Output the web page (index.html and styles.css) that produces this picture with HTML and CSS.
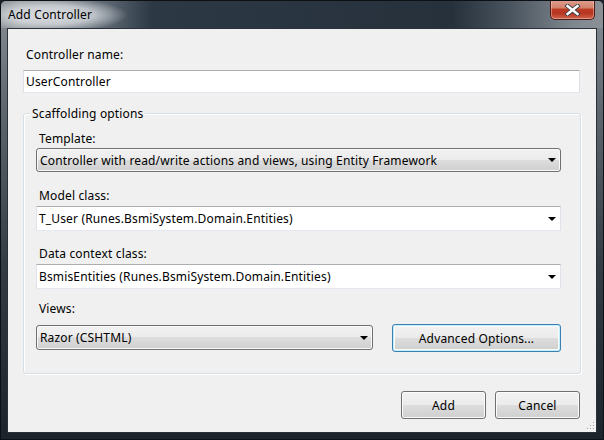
FILE: index.html
```html
<!DOCTYPE html>
<html>
<head>
<meta charset="utf-8">
<link rel="stylesheet" href="styles.css">
</head>
<body>
<div class="window">
  <div class="titlebar">
    <span class="title">Add Controller</span>
    <div class="close">
      <svg width="17" height="12" viewBox="0 0 17 12">
        <path d="M3.5 2 L13.5 10 M13.5 2 L3.5 10" stroke="#3a3f46" stroke-width="4.2" stroke-linecap="square"/>
        <path d="M3.5 2 L13.5 10 M13.5 2 L3.5 10" stroke="#ffffff" stroke-width="2.4" stroke-linecap="square"/>
      </svg>
    </div>
  </div>
  <div class="client">
    <div class="lbl first">Controller name:</div>
    <div class="textbox">UserController</div>
    <div class="group">
      <span class="legend">Scaffolding options</span>
      <div class="lbl g1">Template:</div>
      <div class="combo btnlike">
        <span>Controller with read/write actions and views, using Entity Framework</span>
        <span class="arrow"></span>
      </div>
      <div class="lbl g2">Model class:</div>
      <div class="combo edit">
        <span>T_User (Runes.BsmiSystem.Domain.Entities)</span>
        <span class="arrow"></span>
      </div>
      <div class="lbl g3">Data context class:</div>
      <div class="combo edit">
        <span>BsmisEntities (Runes.BsmiSystem.Domain.Entities)</span>
        <span class="arrow"></span>
      </div>
      <div class="lbl g4">Views:</div>
      <div class="viewrow">
        <div class="combo btnlike views">
          <span>Razor (CSHTML)</span>
          <span class="arrow"></span>
        </div>
        <div class="button focus">Advanced Options...</div>
      </div>
    </div>
    <div class="footer">
      <div class="button foot">Add</div>
      <div class="button foot">Cancel</div>
    </div>
    <svg class="grip" width="8" height="8" viewBox="0 0 8 8">
      <rect x="6" y="0" width="1" height="1" fill="#a0a0a0"/>
      <rect x="3" y="3" width="1" height="1" fill="#a0a0a0"/>
      <rect x="6" y="3" width="1" height="1" fill="#a0a0a0"/>
      <rect x="0" y="6" width="1" height="1" fill="#a0a0a0"/>
      <rect x="3" y="6" width="1" height="1" fill="#a0a0a0"/>
      <rect x="6" y="6" width="1" height="1" fill="#a0a0a0"/>
      <rect x="7" y="1" width="1" height="1" fill="#fff"/>
      <rect x="4" y="4" width="1" height="1" fill="#fff"/>
      <rect x="7" y="4" width="1" height="1" fill="#fff"/>
      <rect x="1" y="7" width="1" height="1" fill="#fff"/>
      <rect x="4" y="7" width="1" height="1" fill="#fff"/>
      <rect x="7" y="7" width="1" height="1" fill="#fff"/>
    </svg>
  </div>
</div>
</body>
</html>
```

FILE: styles.css
```css
* { box-sizing: border-box; }
html, body { margin: 0; padding: 0; }
body {
  width: 604px;
  height: 440px;
  overflow: hidden;
  font-family: "Noto Sans", "Open Sans", sans-serif;
  font-size: 12px;
  letter-spacing: 0.15px;
  color: #000;
  background: #1b2128;
}
.window {
  width: 604px;
  height: 440px;
  border: 1px solid #0d1115;
  border-radius: 6px 6px 0 0;
  background: linear-gradient(to bottom, #8a9096 0%, #5d656d 25%, #333b44 60%, #1c232b 100%);
  display: flex;
  flex-direction: column;
  overflow: hidden;
}
.titlebar {
  height: 27px;
  flex: none;
  display: flex;
  justify-content: space-between;
  align-items: flex-start;
  padding: 0 8px 0 7px;
  background:
    radial-gradient(ellipse 75px 17px at 52px 14px, rgba(225,228,231,0.95) 0%, rgba(225,228,231,0.7) 55%, rgba(225,228,231,0) 100%),
    linear-gradient(to right, #8e959b 0%, #9aa0a6 3%, #5a6570 18%, #2c3844 25%, #26313c 75%, #4c5660 85%, #7f878e 95%, #8a9096 100%);
}
.title {
  line-height: 16px;
  margin-top: 6px;
  color: #000;
}
.close {
  width: 45px;
  height: 20px;
  margin-top: -1px;
  border: 1px solid #4b1d16;
  border-top: none;
  border-radius: 0 0 5px 5px;
  background: linear-gradient(to bottom, #dfa08f 0%, #d2826c 40%, #bd3a24 50%, #b73521 70%, #d0654c 100%);
  box-shadow: inset 0 0 0 1px rgba(255,210,200,0.45);
  display: flex;
  align-items: center;
  justify-content: center;
}
.close svg { display: block; margin-top: 1px; }
.client {
  position: relative;
  flex: 1;
  margin: 0 6px 6px 6px;
  border: 1px solid #2a3038;
  background: #f0f0f0;
  padding: 18px 16px 0 15px;
  display: flex;
  flex-direction: column;
}
.lbl {
  line-height: 16px;
  height: 16px;
  padding-left: 3px;
  white-space: nowrap;
}
.textbox {
  margin-top: 7px;
  height: 23px;
  width: 557px;
  border: 1px solid #abadb3;
  border-left-color: #dbdfe6;
  border-right-color: #dbdfe6;
  border-bottom-color: #e3e9ef;
  background: #fff;
  line-height: 21px;
  padding-left: 2px;
}
.group {
  position: relative;
  margin-top: 20px;
  width: 558px;
  border: 1px solid #d5dfe5;
  border-radius: 3px;
  box-shadow: inset 1px 1px 0 #fff, 1px 1px 0 #fff;
  padding: 17px 19px 21px 12px;
  display: flex;
  flex-direction: column;
}
.legend {
  position: absolute;
  left: 6px;
  top: -8px;
  line-height: 16px;
  padding: 0 2px;
  background: #f0f0f0;
}
.g2 { margin-top: 16px; }
.g3 { margin-top: 15px; }
.g4 { margin-top: 12px; }
.combo {
  position: relative;
  display: flex;
  align-items: center;
  justify-content: space-between;
  white-space: nowrap;
}
.combo .arrow {
  width: 0;
  height: 0;
  border-left: 4px solid transparent;
  border-right: 4px solid transparent;
  border-top: 4px solid #000;
  margin-right: 4px;
}
.btnlike {
  margin-top: 1px;
  height: 24px;
  border: 1px solid #707070;
  border-radius: 3px;
  background: linear-gradient(to bottom, #f2f2f2 0%, #ebebeb 50%, #dddddd 50%, #cfcfcf 100%);
  box-shadow: inset 0 0 0 1px #fafafa;
  padding-left: 3px;
}
.edit {
  margin-top: 2px;
  height: 25px;
  border: 1px solid #abadb3;
  border-left-color: #e2e3ea;
  border-right-color: #e2e3ea;
  border-bottom-color: #e3e9ef;
  background: #fff;
  padding-left: 2px;
}
.viewrow {
  margin-top: 7px;
  display: flex;
  align-items: flex-start;
  gap: 19px;
}
.views {
  margin-top: 1px;
  width: 337px;
  height: 25px;
}
.button {
  display: flex;
  align-items: center;
  justify-content: center;
  border: 1px solid #707070;
  border-radius: 3px;
  background: linear-gradient(to bottom, #f2f2f2 0%, #ebebeb 50%, #dddddd 50%, #cfcfcf 100%);
  box-shadow: inset 0 0 0 1px #fbfbfb;
  white-space: nowrap;
}
.focus {
  width: 169px;
  height: 28px;
  border-color: #3c7fb1;
  box-shadow: inset 0 0 0 1px #48d8fb55, inset 0 0 0 2px #fbfbfb;
}
.footer {
  margin-top: 17px;
  display: flex;
  justify-content: flex-end;
  gap: 9px;
}
.foot {
  width: 85px;
  height: 28px;
}
.grip {
  position: absolute;
  right: 1px;
  bottom: 2px;
}
```
